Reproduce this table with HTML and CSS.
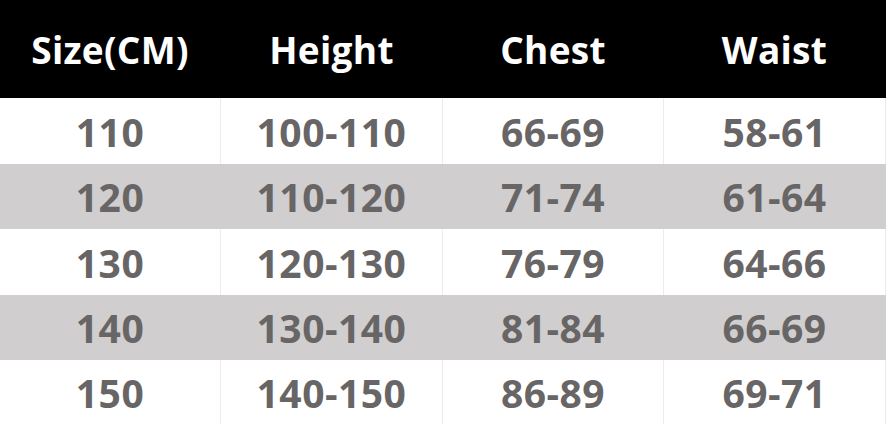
FILE: index.html
```html
<!DOCTYPE html>
<html>
<head>
<meta charset="utf-8">
<link rel="stylesheet" href="styles.css">
</head>
<body>
<div class="table">
  <div class="row head">
    <div class="cell">Size(CM)</div><div class="cell">Height</div><div class="cell">Chest</div><div class="cell">Waist</div>
  </div>
  <div class="row">
    <div class="cell">110</div><div class="cell">100-110</div><div class="cell">66-69</div><div class="cell">58-61</div>
  </div>
  <div class="row alt">
    <div class="cell">120</div><div class="cell">110-120</div><div class="cell">71-74</div><div class="cell">61-64</div>
  </div>
  <div class="row">
    <div class="cell">130</div><div class="cell">120-130</div><div class="cell">76-79</div><div class="cell">64-66</div>
  </div>
  <div class="row alt">
    <div class="cell">140</div><div class="cell">130-140</div><div class="cell">81-84</div><div class="cell">66-69</div>
  </div>
  <div class="row last">
    <div class="cell">150</div><div class="cell">140-150</div><div class="cell">86-89</div><div class="cell">69-71</div>
  </div>
</div>
</body>
</html>
```
FILE: styles.css
```css
html, body {
  margin: 0;
  padding: 0;
  background: #ffffff;
}
.table {
  width: 886px;
  display: flex;
  flex-direction: column;
  font-family: "Open Sans", "Noto Sans", sans-serif;
  font-weight: 700;
}
.row {
  display: grid;
  grid-template-columns: 221px 222px 221px 222px;
  height: 66px;
  color: #676565;
  font-size: 39px;
  letter-spacing: 0.5px;
}
.row.alt {
  background: #d0cece;
  height: 65px;
}
.row.last {
  height: 64px;
}
.row.head {
  background: #000000;
  color: #ffffff;
  height: 98px;
  font-size: 37px;
  letter-spacing: 0.3px;
}
.cell {
  display: flex;
  align-items: center;
  justify-content: center;
  border-right: 1px solid #ececec;
  line-height: 1;
}
.row.alt .cell {
  border-right-color: #d0cece;
}
.row.head .cell {
  border-right-color: #000000;
}
```
